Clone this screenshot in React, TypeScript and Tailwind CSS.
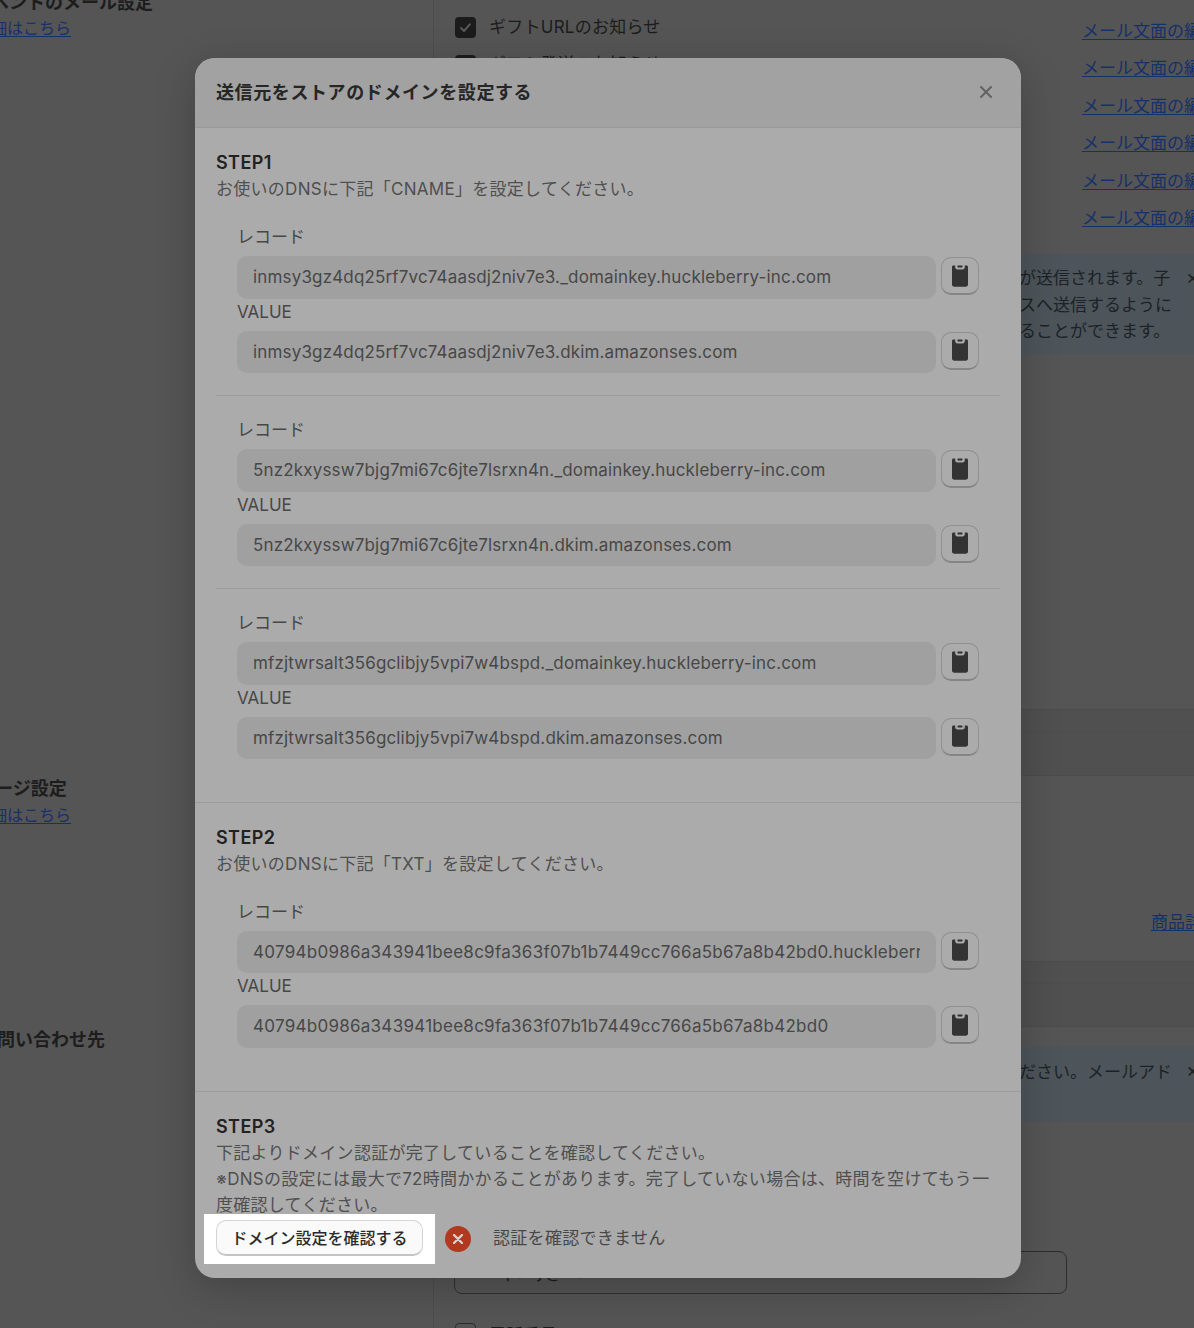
const font = { fontFamily: 'Inter, "Noto Sans CJK JP", "Noto Sans", sans-serif' };

function ClipIcon() {
  return (
    <svg width="16" height="22" viewBox="0 0 16 22" aria-hidden="true">
      <path
        fill="#333333"
        d="M1.5 0.5H3.2V2.2C3.2 3.6 4.2 4.4 5.4 4.4H10.6C11.8 4.4 12.8 3.6 12.8 2.2V0.5H14.5C15.4 0.5 16 1.1 16 2V19.6C16 20.9 15 21.8 13.8 21.8H2.2C1 21.8 0 20.9 0 19.6V2C0 1.1 0.6 0.5 1.5 0.5Z"
      />
      <rect x="5.4" y="0.6" width="5.2" height="2" rx="0.8" fill="#333333" />
    </svg>
  );
}

function CopyButton() {
  return (
    <button className="ml-[5px] mt-[1px] flex h-[38px] w-[38px] shrink-0 items-center justify-center rounded-[10px] border border-[#8f8f8f] border-b-2 border-b-[#858585] bg-[#ababab]">
      <ClipIcon />
    </button>
  );
}

function ValueRow({ value, wide }: { value: string; wide?: boolean }) {
  return (
    <div className="flex h-[42.5px] items-start">
      <div className={`h-[42.5px] min-w-0 flex-1 rounded-[10px] bg-[#a0a0a0] px-[16px] text-[17px] leading-[42px] text-[#474747] ${wide ? "tracking-[0.27px]" : "tracking-[0.16px]"}`}>
        <div className="overflow-hidden whitespace-nowrap">{value}</div>
      </div>
      <CopyButton />
    </div>
  );
}

function RecordGroup({ record, value, divider, wide }: { record: string; value: string; divider?: boolean; wide?: boolean }) {
  return (
    <div className={divider ? "border-t border-[#9c9c9c] pt-[20px]" : ""}>
      <div className="pl-[21px] pr-[21px]">
        <div className="mb-[6px] mt-[1px] text-[17px] leading-[26px] text-[#474747]">レコード</div>
        <ValueRow value={record} wide={wide} />
        <div className="mb-[6px] text-[17px] leading-[26px] text-[#474747]">VALUE</div>
        <ValueRow value={value} wide={wide} />
      </div>
    </div>
  );
}

function StepHead({ title, children }: { title: string; children: React.ReactNode }) {
  return (
    <>
      <div className="text-[18px] font-semibold leading-[26px] tracking-[0.4px] text-[#222222]">{title}</div>
      <div className="text-[17px] leading-[26.3px] tracking-[0.28px] text-[#4f4f4f]">{children}</div>
    </>
  );
}

function Checkbox({ label }: { label: string }) {
  return (
    <div className="flex h-[37.4px] items-center gap-[13px]">
      <div className="flex h-[21px] w-[21px] items-center justify-center rounded-[4px] bg-[#1c1c1c]">
        <svg width="13" height="13" viewBox="0 0 13 13" fill="none" aria-hidden="true">
          <path d="M2 7L5 10L11 3.2" stroke="#5a5a5a" strokeWidth="2" strokeLinecap="round" strokeLinejoin="round" />
        </svg>
      </div>
      <span className="text-[17px] tracking-[0.25px] text-[#1c1c1c]">{label}</span>
    </div>
  );
}

const linkClass = "text-[17px] leading-[26px] text-[#16306a] underline underline-offset-2";
const sideLinkClass = "-ml-[25px] block text-[16px] leading-[26px] text-[#16306a] underline underline-offset-2";

export default function App() {
  return (
    <div style={font} className="relative flex h-[1328px] w-full overflow-hidden bg-[#555555]">
      <aside className="w-[434px] shrink-0 border-r border-[#4d4d4d]">
        <div className="-ml-[27px] -mt-[10px] text-[18px] font-semibold leading-[26px] text-[#1d1d1d]">イベントのメール設定</div>
        <a className={`${sideLinkClass} -mt-[1px]`}>詳細はこちら</a>
        <div className="-ml-[23px] mt-[735px] text-[18px] font-semibold leading-[26px] text-[#1d1d1d]">ページ設定</div>
        <a className={sideLinkClass}>詳細はこちら</a>
        <div className="-ml-[21px] mt-[199px] text-[18px] font-semibold leading-[26px] text-[#1d1d1d]">お問い合わせ先</div>
      </aside>

      <main className="min-w-0 flex-1">
        <div className="flex h-[253px] pl-[21px] pt-[9px]">
          <div className="w-[627px]">
            <Checkbox label="ギフトURLのお知らせ" />
            <Checkbox label="ギフト発送のお知らせ" />
          </div>
          <div className="flex-1 overflow-hidden whitespace-nowrap pt-[9px]">
            {[0, 1, 2, 3, 4, 5].map((i) => (
              <div key={i} className="h-[37.4px]">
                <a className={linkClass}>メール文面の編集</a>
              </div>
            ))}
          </div>
        </div>

        <div className="relative h-[102px] bg-[#4e555a] pl-[585px] pt-[12px] text-[17px] leading-[26.5px] text-[#1b2328]">
          <div>が送信されます。子</div>
          <div>スへ送信するように</div>
          <div>ることができます。</div>
          <span className="absolute left-[752px] top-[11px] text-[20px] leading-[26px]">×</span>
        </div>

        <div className="mt-[354px] h-[67px] border-y border-[#4c4c4c] bg-[#505050]">
          <div className="h-[23px] border-b border-[#4e4e4e]" />
        </div>

        <div className="h-[185px] overflow-hidden whitespace-nowrap pl-[717px] pt-[133px]">
          <a className={linkClass}>商品詳細</a>
        </div>

        <div className="h-[66px] border-y border-[#4c4c4c] bg-[#505050]">
          <div className="h-[22px] border-b border-[#4e4e4e]" />
        </div>

        <div className="relative mt-[20px] h-[75px] bg-[#4e555a] pl-[585px] pt-[12px] text-[17px] leading-[26px] text-[#1b2328]">
          <div>ださい。メールアド</div>
          <span className="absolute left-[752px] top-[10px] text-[20px] leading-[26px]">×</span>
        </div>

        <div className="ml-[20px] mt-[129px] flex h-[43px] w-[613px] items-center rounded-[8px] border border-[#2e2e2e] pl-[16px] text-[17px] text-[#1c1c1c]">
          company@mail.com
        </div>

        <div className="ml-[21px] mt-[29px] flex items-start gap-[13px]">
          <div className="h-[21px] w-[21px] shrink-0 rounded-[4px] border border-[#2e2e2e]" />
          <span className="text-[17px] text-[#1c1c1c]">電話番号</span>
        </div>
      </main>

      <div className="absolute left-[195px] top-[58px] h-[1220px] w-[826px] overflow-hidden rounded-[20px] bg-[#ababab] shadow-[0_10px_40px_rgba(0,0,0,0.22)]">
        <header className="flex h-[70px] items-center justify-between border-b border-[#999999] bg-[#a2a2a2] pb-[1px] pl-[21px] pr-[29px]">
          <h2 className="text-[18px] font-semibold tracking-[0.6px] text-[#262626]">送信元をストアのドメインを設定する</h2>
          <svg width="12" height="12" viewBox="0 0 12 12" fill="none" aria-hidden="true">
            <path d="M1 1L11 11M11 1L1 11" stroke="#626262" strokeWidth="2" strokeLinecap="round" />
          </svg>
        </header>

        <section className="border-b border-[#9c9c9c] pb-[43px] pt-[22px]">
          <div className="px-[21px]">
            <StepHead title="STEP1">お使いのDNSに下記「CNAME」を設定してください。</StepHead>
            <div className="h-[21px]" />
            <RecordGroup
              record="inmsy3gz4dq25rf7vc74aasdj2niv7e3._domainkey.huckleberry-inc.com"
              value="inmsy3gz4dq25rf7vc74aasdj2niv7e3.dkim.amazonses.com"
            />
            <div className="h-[22px]" />
            <RecordGroup
              divider
              record="5nz2kxyssw7bjg7mi67c6jte7lsrxn4n._domainkey.huckleberry-inc.com"
              value="5nz2kxyssw7bjg7mi67c6jte7lsrxn4n.dkim.amazonses.com"
            />
            <div className="h-[22px]" />
            <RecordGroup
              divider
              record="mfzjtwrsalt356gclibjy5vpi7w4bspd._domainkey.huckleberry-inc.com"
              value="mfzjtwrsalt356gclibjy5vpi7w4bspd.dkim.amazonses.com"
            />
          </div>
        </section>

        <section className="border-b border-[#9c9c9c] pb-[43px] pt-[22px]">
          <div className="px-[21px]">
            <StepHead title="STEP2">お使いのDNSに下記「TXT」を設定してください。</StepHead>
            <div className="h-[20px]" />
            <RecordGroup
              wide
              record="40794b0986a343941bee8c9fa363f07b1b7449cc766a5b67a8b42bd0.huckleberry-inc.com"
              value="40794b0986a343941bee8c9fa363f07b1b7449cc766a5b67a8b42bd0"
            />
          </div>
        </section>

        <section className="px-[21px] pt-[22px]">
          <StepHead title="STEP3">
            下記よりドメイン認証が完了していることを確認してください。
            <br />
            ※DNSの設定には最大で72時間かかることがあります。完了していない場合は、時間を空けてもう一度確認してください。
          </StepHead>
          <div className="-mt-[4px] flex items-center">
            <div className="-ml-[12px] bg-white pb-[8px] pl-[12px] pr-[12px] pt-[6px]">
              <button className="flex h-[36px] w-[207px] items-center justify-center rounded-[10px] border border-[#d4d4d4] border-b-2 border-b-[#c4c4c4] bg-[#fafafa] text-[16px] font-medium text-[#2b2b2b]">
                ドメイン設定を確認する
              </button>
            </div>
            <div className="ml-[10px] flex h-[26px] w-[26px] items-center justify-center rounded-full bg-[#b0391f]">
              <svg width="10" height="10" viewBox="0 0 10 10" fill="none" aria-hidden="true">
                <path d="M1 1L9 9M9 1L1 9" stroke="#d9d0cd" strokeWidth="2.4" strokeLinecap="round" />
              </svg>
            </div>
            <span className="mb-[2px] ml-[22px] text-[17px] tracking-[0.3px] text-[#474747]">認証を確認できません</span>
          </div>
        </section>
      </div>
    </div>
  );
}
